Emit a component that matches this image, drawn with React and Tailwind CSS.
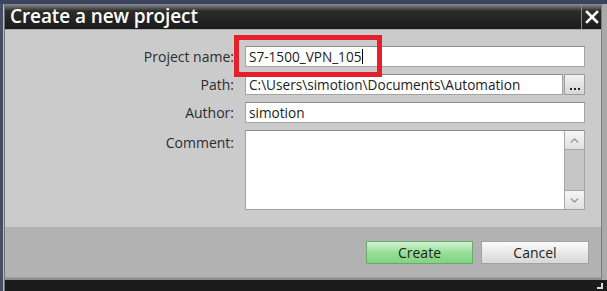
import { ChevronUp, ChevronDown } from 'lucide-react'

const FIELD =
  'h-[21px] bg-white border border-[#a3a3a3] border-t-[#8c8c8c] flex items-center pl-[3px] text-[13.6px] text-[#1c1c1c] leading-none'

function Label({ children, top }) {
  return (
    <div
      className={`w-[229px] shrink-0 text-right text-[14px] text-[#2b2b2b] leading-none ${
        top ? 'self-start pt-[6px]' : ''
      }`}
    >
      {children}
    </div>
  )
}

export default function App() {
  return (
    <div className="w-[607px] h-[291px] overflow-hidden bg-[#3a4460] flex flex-col font-['Open_Sans',sans-serif]">
      <div className="h-[4px] shrink-0" />
      <div className="flex flex-1 min-h-0">
        {/* left window frame */}
        <div className="w-[5px] shrink-0 flex">
          <div className="w-[3px] bg-[#464d64]" />
          <div className="w-[1px] bg-[#b8bcc8]" />
          <div className="w-[1px] bg-[#707278]" />
        </div>

        <div className="flex-1 min-w-0 flex flex-col">
          {/* Title bar */}
          <div className="h-[25px] shrink-0 flex bg-[linear-gradient(#8c8c8c,#2c2c2c_28%,#1b1b1b)]">
            <div className="flex-1 pl-[5px] flex items-center text-white text-[19px] font-semibold leading-none tracking-[-0.1px]">
              Create a new project
            </div>
            <div className="w-[20px] border-l border-[#8a8a8a] flex items-center justify-center">
              <svg width="14" height="14" viewBox="0 0 14 14">
                <path d="M2 2 L12 12 M12 2 L2 12" stroke="#fff" strokeWidth="2.6" strokeLinecap="square" />
              </svg>
            </div>
          </div>

          {/* Form body */}
          <div className="h-[198px] shrink-0 bg-[#cbcbcb] border-t border-[#a9a9a9] pt-[16px] flex flex-col gap-[7px]">
            <div className="flex items-center">
              <Label>Project name:</Label>
              <div className="relative ml-[11px] w-[340px]">
                <div className={FIELD}>
                  S7-1500_VPN_105
                  <span className="ml-[1px] w-[1px] h-[15px] bg-black" />
                </div>
                {/* highlight frame */}
                <div className="absolute left-[-11px] top-[-11px] w-[148px] h-[42px] border-[5px] border-[#e5202b]" />
              </div>
            </div>

            <div className="flex items-center">
              <Label>Path:</Label>
              <div className="ml-[11px] flex w-[340px]">
                <div className={`${FIELD} flex-1`}>C:\Users\simotion\Documents\Automation</div>
                <div className="ml-[1px] w-[21px] h-[21px] border border-[#9c9c9c] bg-[linear-gradient(#f2f2f2,#d6d6d6)] flex items-end justify-center pb-[4px] gap-[2px]">
                  <span className="w-[2px] h-[2px] bg-[#222]" />
                  <span className="w-[2px] h-[2px] bg-[#222]" />
                  <span className="w-[2px] h-[2px] bg-[#222]" />
                </div>
              </div>
            </div>

            <div className="flex items-center">
              <Label>Author:</Label>
              <div className={`${FIELD} ml-[11px] w-[340px]`}>simotion</div>
            </div>

            <div className="flex">
              <Label top>Comment:</Label>
              <div className="ml-[11px] w-[340px] h-[80px] flex bg-white border border-[#a3a3a3] border-t-[#8c8c8c]">
                <div className="flex-1" />
                <div className="w-[20px] flex flex-col bg-[#c6c6c6] border-l border-[#a8a8a8]">
                  <div className="h-[19px] bg-[linear-gradient(#f6f6f6,#e0e0e0)] border-b border-[#a8a8a8] flex items-center justify-center">
                    <ChevronUp size={13} strokeWidth={2.5} color="#8f8f8f" />
                  </div>
                  <div className="flex-1" />
                  <div className="h-[19px] bg-[linear-gradient(#f6f6f6,#e0e0e0)] border-t border-[#a8a8a8] flex items-center justify-center">
                    <ChevronDown size={13} strokeWidth={2.5} color="#8f8f8f" />
                  </div>
                </div>
              </div>
            </div>
          </div>

          {/* Button bar */}
          <div className="h-[50px] shrink-0 bg-[#b2b2b2] flex justify-end items-start pt-[14px] pr-[12px] gap-[8px]">
            <button className="w-[107px] h-[23px] border border-[#6ba86b] bg-[linear-gradient(#d2f3d2,#97df97_50%,#80d480)] text-[14px] text-[#1e1e1e] leading-none">
              Create
            </button>
            <button className="w-[108px] h-[23px] border border-[#a2a2a2] bg-[linear-gradient(#fbfbfb,#e8e8e8_50%,#d8d8d8)] text-[14px] text-[#1e1e1e] leading-none">
              Cancel
            </button>
          </div>

          <div className="h-[3px] shrink-0 bg-[#8e8e8e] border-t border-[#a0a0a0]" />
          <div className="h-[11px] shrink-0 bg-[#1c1c1c]" />
        </div>

        {/* right frame */}
        <div className="w-[6px] shrink-0 flex flex-col">
          <div className="flex-1 flex">
            <div className="w-[1px] bg-[#7c7c7c]" />
            <div className="flex-1 bg-[#a9a9a9]" />
          </div>
          <div className="h-[11px] bg-[#1c1c1c] relative">
            <div className="absolute left-[-4px] top-[3px] w-[6px] h-[6px] border-r-2 border-b-2 border-[#d8d8d8]" />
          </div>
        </div>
      </div>
    </div>
  )
}
